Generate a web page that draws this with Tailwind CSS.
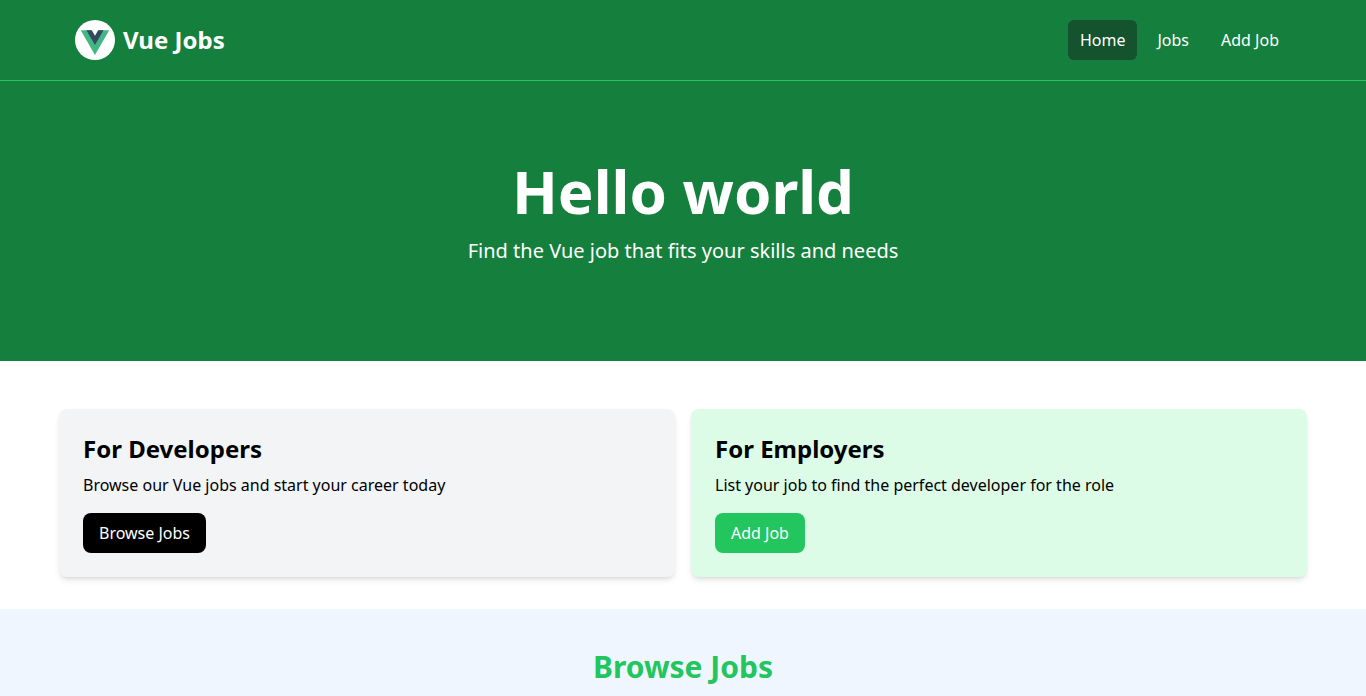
<!DOCTYPE html>
<html lang="en">
<head>
<meta charset="utf-8">
<meta name="viewport" content="width=device-width, initial-scale=1">
<title>Vue Jobs</title>
<script src="https://cdn.jsdelivr.net/npm/@tailwindcss/browser@4"></script>
</head>
<body class="flex min-h-screen flex-col bg-white text-black font-['Noto_Sans',sans-serif]">
<nav class="border-b border-[#22c55e] bg-[#15803d]">
  <div class="mx-auto max-w-7xl px-8">
    <div class="flex h-20 items-center justify-between">
      <a href="#" class="flex items-center">
        <svg class="h-10 w-10" viewBox="0 0 40 40" aria-hidden="true">
          <circle cx="20" cy="20" r="20" fill="#fff"/>
          <g transform="translate(5.700 10.200) scale(.109)">
            <path d="M161.096 0 130.871 52.352 100.647 0H0l130.872 226.688L261.749 0z" fill="#41b883"/>
            <path d="M161.096 0 130.871 52.352 100.647 0H52.346l78.526 136.010L209.398 0z" fill="#34495e"/>
          </g>
        </svg>
        <span class="ml-2 text-2xl font-bold text-white">Vue Jobs</span>
      </a>
      <div class="flex space-x-2">
        <a href="#" class="rounded-md bg-[#14532d] px-3 py-2 text-white">Home</a>
        <a href="#jobs" class="rounded-md px-3 py-2 text-white">Jobs</a>
        <a href="#add" class="rounded-md px-3 py-2 text-white">Add Job</a>
      </div>
    </div>
  </div>
</nav>
<section class="bg-[#15803d] py-20">
  <div class="mx-auto flex max-w-7xl flex-col items-center px-8 text-center text-white">
    <h1 class="text-6xl font-bold">Hello world</h1>
    <p class="my-4 text-xl">Find the Vue job that fits your skills and needs</p>
  </div>
</section>
<section class="pt-8 pb-4">
  <div class="mx-auto grid max-w-7xl grid-cols-1 gap-4 p-4 md:grid-cols-2">
    <div class="rounded-lg bg-[#f3f4f6] p-6 shadow-md">
      <h2 class="text-2xl font-bold">For Developers</h2>
      <p class="mt-2 mb-4">Browse our Vue jobs and start your career today</p>
      <a href="#jobs" class="inline-block rounded-lg bg-black px-4 py-2 text-white">Browse Jobs</a>
    </div>
    <div class="rounded-lg bg-[#dcfce7] p-6 shadow-md">
      <h2 class="text-2xl font-bold">For Employers</h2>
      <p class="mt-2 mb-4">List your job to find the perfect developer for the role</p>
      <a href="#add" class="inline-block rounded-lg bg-[#22c55e] px-4 py-2 text-white">Add Job</a>
    </div>
  </div>
</section>
<section id="jobs" class="grow bg-[#eff6ff] px-4 pt-10">
  <h2 class="text-center text-3xl font-bold text-[#22c55e]">Browse Jobs</h2>
</section>
</body>
</html>
